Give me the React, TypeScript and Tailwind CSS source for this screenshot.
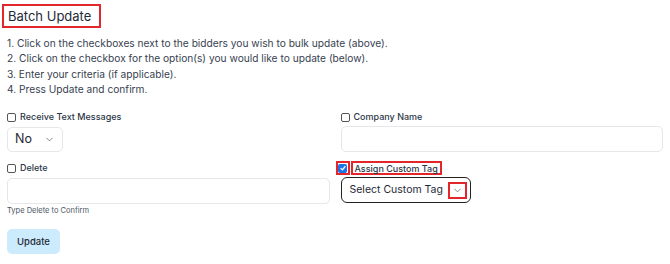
import { ChevronDown } from 'lucide-react';

const steps = [
  '1. Click on the checkboxes next to the bidders you wish to bulk update (above).',
  '2. Click on the checkbox for the option(s) you would like to update (below).',
  '3. Enter your criteria (if applicable).',
  '4. Press Update and confirm.',
];

function Box({ checked = false }: { checked?: boolean }) {
  if (checked) {
    return (
      <span className="w-[9px] h-[9px] rounded-[2px] bg-[#1a73e8] flex items-center justify-center">
        <svg viewBox="0 0 10 10" className="w-[8px] h-[8px]">
          <path d="M2 5.2 L4.2 7.3 L8 2.8" stroke="white" strokeWidth="1.6" fill="none" />
        </svg>
      </span>
    );
  }
  return <span className="w-[9px] h-[9px] rounded-[2px] border border-[#555] bg-white" />;
}

export default function App() {
  return (
    <div
      className="w-[670px] h-[264px] bg-white px-[7px] pt-[3px] text-[#374151]"
      style={{ fontFamily: 'Inter, "Noto Sans", sans-serif' }}
    >
      <div className="inline-block border-2 border-[#e3262b] ml-[-5px] pl-[4px] pr-[8px] py-[1px]">
        <h2 className="text-[13px] leading-[18px] text-[#1f2937]">Batch Update</h2>
      </div>

      <ol className="mt-[8px] text-[10.2px] leading-[15.3px] text-[#374151]">
        {steps.map((s) => (
          <li key={s}>{s}</li>
        ))}
      </ol>

      <div className="grid grid-cols-2 gap-x-[11px] mt-[13px]">
        <div>
          <label className="flex items-center gap-[4px] h-[14px] text-[9px] font-medium text-[#2d3748]">
            <Box />
            <span>Receive Text Messages</span>
          </label>
          <div className="mt-[3px] w-[56px] h-[25px] border border-[#e5e7eb] rounded-[5px] flex items-center justify-between pl-[7px] pr-[7px] text-[12.5px] text-[#1f2937]">
            <span>No</span>
            <ChevronDown className="w-[11px] h-[11px] text-[#4b5563]" strokeWidth={1.5} />
          </div>
        </div>
        <div>
          <label className="flex items-center gap-[4px] h-[14px] text-[9px] font-medium text-[#2d3748]">
            <Box />
            <span>Company Name</span>
          </label>
          <div className="mt-[2px] h-[26px] border border-[#e5e7eb] rounded-[5px]" />
        </div>

        <div className="mt-[9px]">
          <label className="flex items-center gap-[4px] h-[14px] text-[9px] font-medium text-[#2d3748]">
            <Box />
            <span>Delete</span>
          </label>
          <div className="mt-[3px] h-[26px] border border-[#e5e7eb] rounded-[5px]" />
          <p className="mt-[2px] text-[7.5px] leading-[10px] text-[#4b5563]">Type Delete to Confirm</p>
        </div>
        <div className="mt-[9px]">
          <label className="flex items-center gap-[1px] h-[14px] text-[9px] font-medium text-[#2d3748]">
            <span className="border-2 border-[#e3262b] w-[14px] h-[14px] ml-[-5px] flex items-center justify-center">
              <Box checked />
            </span>
            <span className="border-2 border-[#e3262b] h-[14px] px-[2px] flex items-center leading-none">
              Assign Custom Tag
            </span>
          </label>
          <div className="mt-[2px] w-[130px] h-[26px] border-[1.5px] border-[#222] rounded-[6px] flex items-center justify-between pl-[8px] pr-[3px] text-[10.5px] text-[#1f2937] whitespace-nowrap">
            <span>Select Custom Tag</span>
            <span className="border-2 border-[#e3262b] w-[19px] h-[17px] flex items-center justify-center">
              <ChevronDown className="w-[11px] h-[11px] text-[#4b5563]" strokeWidth={1.5} />
            </span>
          </div>
        </div>
      </div>

      <button className="mt-[13px] w-[53px] h-[25px] rounded-[5px] bg-[#ccebfd] text-[9.5px] font-medium text-[#1f2937]">
        Update
      </button>
    </div>
  );
}
